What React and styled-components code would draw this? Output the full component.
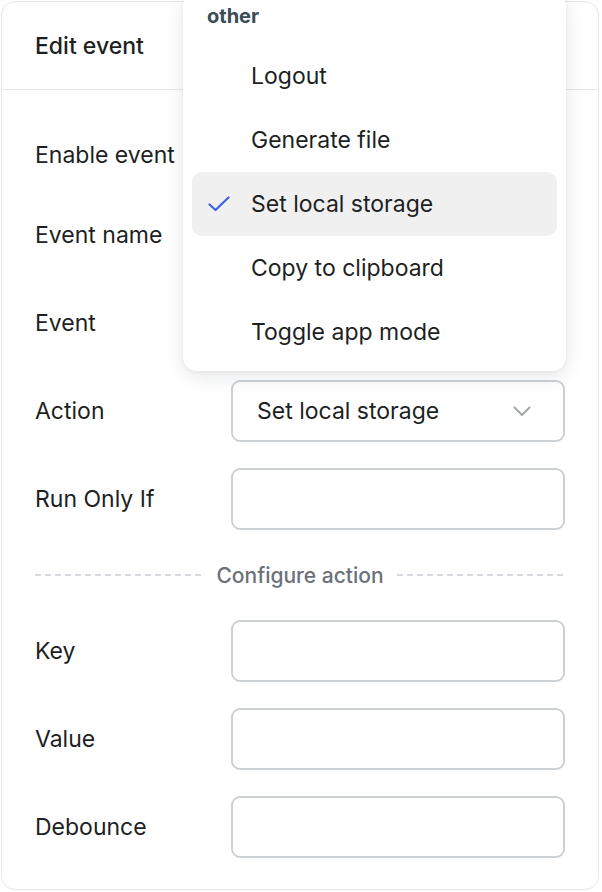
import React from "react";
import styled, { createGlobalStyle } from "styled-components";

const GlobalStyle = createGlobalStyle`
  html, body {
    margin: 0;
    padding: 0;
    background: #ffffff;
  }
  body {
    font-family: Inter, "Noto Sans", Roboto, sans-serif;
    color: #1d1f23;
    -webkit-font-smoothing: antialiased;
  }
  * {
    box-sizing: border-box;
  }
`;

const actionOptions = [
  "Logout",
  "Generate file",
  "Set local storage",
  "Copy to clipboard",
  "Toggle app mode",
];

function App() {
  const selected = "Set local storage";

  return (
    <Page>
      <GlobalStyle />
      <Panel>
        <Header>Edit event</Header>
        <Body>
          <Row $height={46}>
            <Label>Enable event</Label>
            <Toggle />
          </Row>
          <Row>
            <Label>Event name</Label>
            <Field />
          </Row>
          <Row>
            <Label>Event</Label>
            <Field />
          </Row>
          <Row>
            <Label>Action</Label>
            <Select>
              <span>{selected}</span>
              <svg width="18" height="11" viewBox="0 0 18 11" fill="none">
                <path d="M1.5 1.5L9 9L16.5 1.5" stroke="#a3a8ae" strokeWidth="2" strokeLinecap="round" strokeLinejoin="round" />
              </svg>
            </Select>
          </Row>
          <Row>
            <Label>Run Only If</Label>
            <Field />
          </Row>
          <Divider>
            <span>Configure action</span>
          </Divider>
          <Row>
            <Label>Key</Label>
            <Field />
          </Row>
          <Row>
            <Label>Value</Label>
            <Field />
          </Row>
          <Row>
            <Label>Debounce</Label>
            <Field />
          </Row>
        </Body>
      </Panel>

      <Menu>
        <GroupLabel>other</GroupLabel>
        {actionOptions.map((option) => (
          <MenuItem key={option} $active={option === selected}>
            <Check>
              {option === selected && (
                <svg width="22" height="16" viewBox="0 0 22 16" fill="none">
                  <path d="M1.5 8.5L7.5 14L20.5 1.5" stroke="#3c63e6" strokeWidth="2.2" strokeLinecap="round" strokeLinejoin="round" />
                </svg>
              )}
            </Check>
            {option}
          </MenuItem>
        ))}
      </Menu>
    </Page>
  );
}

const Page = styled.div`
  position: relative;
  width: 602px;
  height: 892px;
  padding: 1px 3px 1px 1px;
  overflow: hidden;
`;

const Panel = styled.div`
  height: 889px;
  border: 1.5px solid #e4e7eb;
  border-radius: 14px;
  background: #fff;
  display: flex;
  flex-direction: column;
`;

const Header = styled.div`
  height: 88px;
  flex-shrink: 0;
  display: flex;
  align-items: center;
  padding-left: 33px;
  font-size: 23px;
  font-weight: 500;
  border-bottom: 1.5px solid #e4e7eb;
`;

const Body = styled.div`
  display: flex;
  flex-direction: column;
  gap: 26px;
  padding: 42px 33px 0 33px;
`;

const Row = styled.div`
  display: grid;
  grid-template-columns: 196px 1fr;
  align-items: center;
  min-height: ${(p) => p.$height || 62}px;
`;

const Label = styled.div`
  font-size: 23px;
  color: #1d1f23;
`;

const Field = styled.div`
  height: 62px;
  border: 2px solid #cdd1d6;
  border-radius: 9px;
  background: #fff;
`;

const Toggle = styled.div`
  width: 52px;
  height: 28px;
  border-radius: 14px;
  background: #e4e7eb;
`;

const Select = styled(Field)`
  display: flex;
  align-items: center;
  justify-content: space-between;
  padding: 0 32px 0 24px;
  font-size: 23px;
  color: #1d1f23;
`;

const Divider = styled.div`
  height: 38px;
  display: flex;
  align-items: center;
  gap: 13px;
  font-size: 21px;
  font-weight: 500;
  color: #6a7179;

  &::before,
  &::after {
    content: "";
    flex: 1;
    height: 2px;
    background: repeating-linear-gradient(
      to right,
      #d6d9dd 0 6px,
      transparent 6px 10px
    );
  }
`;

const Menu = styled.div`
  position: absolute;
  top: -8px;
  left: 183px;
  width: 383px;
  padding: 8px 9px 7px;
  background: #fff;
  border-radius: 14px;
  box-shadow: 0 6px 20px rgba(20, 30, 45, 0.1), 0 1px 4px rgba(20, 30, 45, 0.06);
`;

const GroupLabel = styled.div`
  padding: 4px 15px 16px;
  line-height: 24px;
  font-size: 20px;
  font-weight: 700;
  color: #3a4c58;
`;

const MenuItem = styled.div`
  height: 64px;
  display: flex;
  align-items: center;
  padding-left: 16px;
  border-radius: 10px;
  font-size: 23px;
  color: #1d1f23;
  background: ${(p) => (p.$active ? "#f0f0f1" : "transparent")};
`;

const Check = styled.span`
  width: 43px;
  display: flex;
  align-items: center;
`;

export default App;
